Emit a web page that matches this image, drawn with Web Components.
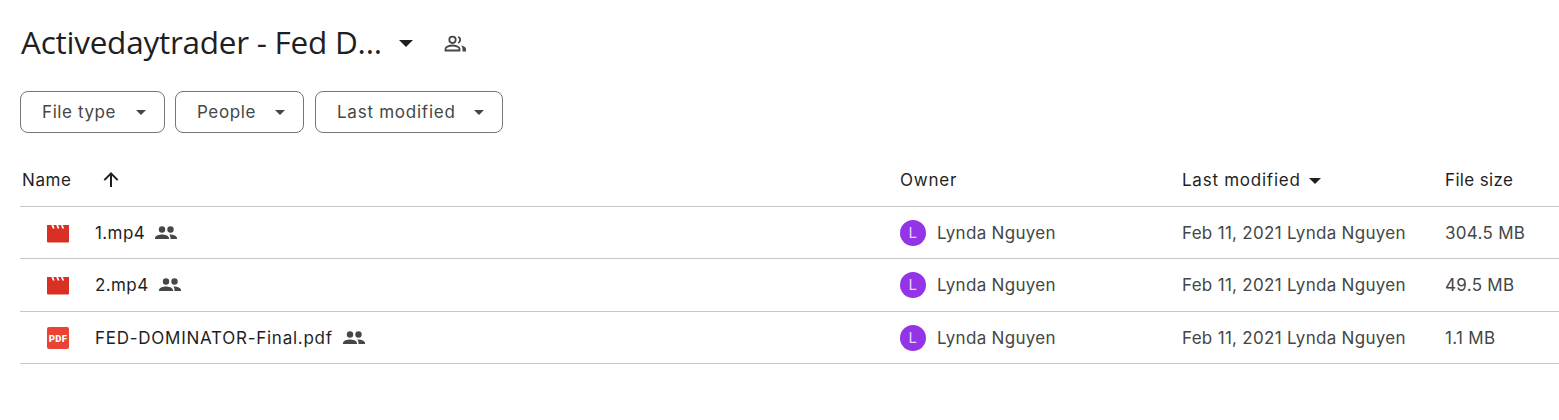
<!DOCTYPE html>
<html>
<head>
<meta charset="utf-8">
<title>Activedaytrader - Fed D...</title>
<style>
  html, body { margin: 0; background: #fff; }
  body { font-family: Inter, Roboto, sans-serif; color: #1f1f1f; }
</style>
</head>
<body>
<drive-page>
  <folder-title slot="title">Activedaytrader - Fed D...</folder-title>
  <filter-chip slot="filters" style="--chip-width:145px">File type</filter-chip>
  <filter-chip slot="filters" style="--chip-width:129px">People</filter-chip>
  <filter-chip slot="filters" style="--chip-width:188px;--chip-spacing:.75px;margin-left:1px">Last modified</filter-chip>
  <list-header slot="list"></list-header>
  <file-row slot="list" kind="video" name="1.mp4" owner="Lynda Nguyen" modified="Feb 11, 2021 Lynda Nguyen" size="304.5 MB"></file-row>
  <file-row slot="list" kind="video" name="2.mp4" owner="Lynda Nguyen" modified="Feb 11, 2021 Lynda Nguyen" size="49.5 MB"></file-row>
  <file-row slot="list" kind="pdf" name="FED-DOMINATOR-Final.pdf" owner="Lynda Nguyen" modified="Feb 11, 2021 Lynda Nguyen" size="1.1 MB" style="--name-spacing:.74px;--row-nudge:1px"></file-row>
</drive-page>

<script>
// people icons used in more than one element
const SHARED_OUTLINE = `<svg width="24" height="24" viewBox="0 0 24 24" fill="none" stroke="#444746" stroke-width="1.8"><circle cx="9.500" cy="7.800" r="3.200"/><path d="M2.500 18.500v-1.700c0-2 4.300-3.300 7-3.300s7 1.300 7 3.300v1.700z"/><path d="M15.200 4.700a3.500 3.500 0 0 1 0 6.300"/><path fill="#444746" stroke="none" d="M18 13.400c2.700.5 5 1.500 5 3.500v2.500h-3.500v-2.500c0-1.500-.6-2.600-1.500-3.500z"/></svg>`;
const SHARED_SOLID = `<svg width="24" height="24" viewBox="0 0 24 24" fill="#444746"><circle cx="8" cy="8.500" r="3.200"/><circle cx="16.500" cy="8.500" r="3.200"/><path d="M1 18v-1c0-2.400 4.700-3.500 7-3.500s7 1.100 7 3.500v1H1zM17 13.500c2.300.2 6 1.500 6 3.500v1h-6.500v-1c0-1.500-.5-2.700-1.400-3.400.5-.1 1.300-.1 1.900-.1z"/></svg>`;
const ICONS = {
  video: `<svg width="22" height="22" viewBox="0 0 22 22"><path fill="#d93025" d="M0 3h22v16.500a1 1 0 0 1-1 1H1a1 1 0 0 1-1-1z"/><path fill="#fff" d="M4.500 3h1.800l1.300 3.600H5.800zM9.300 3h1.800l1.300 3.600h-1.800zM14 3h1.800l1.300 3.600h-1.800z"/></svg>`,
  pdf: `<svg width="22" height="22" viewBox="0 0 22 22"><rect width="22" height="22" rx="2" fill="#ea4335"/><text x="11" y="14.500" text-anchor="middle" font-family="Roboto, sans-serif" font-weight="900" font-size="9.500" letter-spacing=".4" fill="#fff">PDF</text></svg>`
};

class DrivePage extends HTMLElement {
  constructor() {
    super();
    this.attachShadow({ mode: 'open' });
    this.shadowRoot.innerHTML = /*html*/ `
      <style>
        :host { display: block; width: 1559px; height: 420px; overflow: hidden; box-sizing: border-box; padding-top: 20px; }
        .title { padding-left: 21px; height: 47px; display: flex; align-items: center; }
        .filters { display: flex; gap: 10px; padding: 24px 0 0 20px; }
        .list { display: flex; flex-direction: column; padding: 26px 0 0 20px; }
      </style>
      <div class="title"><slot name="title"></slot></div>
      <div class="filters"><slot name="filters"></slot></div>
      <div class="list"><slot name="list"></slot></div>
    `;
  }
}

class FolderTitle extends HTMLElement {
  constructor() {
    super();
    this.attachShadow({ mode: 'open' });
    this.shadowRoot.innerHTML = /*html*/ `
      <style>
        :host { display: flex; align-items: center; color: #1f1f1f; }
        .text { font: 400 31.5px/40px "Open Sans", Roboto, sans-serif; letter-spacing: -0.25px; width: 361px; white-space: nowrap; margin-top: -3px; }
        .caret { width: 0; height: 0; border: 7px solid transparent; border-top: 7px solid #1f1f1f; border-bottom: 0; margin-left: 17px; }
        .people { display: flex; margin-left: 30px; }
      </style>
      <span class="text"><slot></slot></span>
      <span class="caret"></span>
      <span class="people">${SHARED_OUTLINE}</span>
    `;
  }
}

class FilterChip extends HTMLElement {
  constructor() {
    super();
    this.attachShadow({ mode: 'open' });
    this.shadowRoot.innerHTML = /*html*/ `
      <style>
        :host { display: flex; align-items: center; justify-content: space-between; box-sizing: border-box; width: var(--chip-width); height: 42px; padding: 0 18px 0 21px; border: 1px solid #747775; border-radius: 8px; font: 400 17px/24px Inter, Roboto, sans-serif; letter-spacing: var(--chip-spacing, .6px); color: #444746; }
        span:first-child { padding-top: 3px; }
        .caret { width: 0; height: 0; border: 5px solid transparent; border-top: 5px solid #444746; border-bottom: 0; }
      </style>
      <span><slot></slot></span>
      <span class="caret"></span>
    `;
  }
}

class ListHeader extends HTMLElement {
  constructor() {
    super();
    this.attachShadow({ mode: 'open' });
    this.shadowRoot.innerHTML = /*html*/ `
      <style>
        :host { display: grid; grid-template-columns: 880px 282px 263px 1fr; align-items: center; height: 48px; padding-bottom: 5px; box-sizing: border-box; border-bottom: 1px solid #c7c7c7; font: 400 17px/24px Inter, Roboto, sans-serif; letter-spacing: .6px; color: #1f1f1f; }
        .name { display: flex; align-items: center; padding-left: 2px; }
        .name svg { margin-left: 27px; }
        .owner { letter-spacing: .8px; }
        .mod { display: flex; align-items: center; gap: 8px; letter-spacing: .75px; }
        .size { letter-spacing: .35px; }
        .caret { width: 0; height: 0; border: 6.5px solid transparent; border-top: 6.5px solid #1f1f1f; border-bottom: 0; margin-top: 2px; }
      </style>
      <div class="name">Name
        <svg width="24" height="24" viewBox="0 0 24 24" fill="#1f1f1f"><path d="M11 19V7.800L6 12.800 4.600 11.400 12 4l7.400 7.400-1.400 1.400-5-5V19z"/></svg>
      </div>
      <div class="owner">Owner</div>
      <div class="mod">Last modified <span class="caret"></span></div>
      <div class="size">File size</div>
    `;
  }
}

class FileRow extends HTMLElement {
  constructor() {
    super();
    this.attachShadow({ mode: 'open' });
    const kind = this.getAttribute('kind');
    this.shadowRoot.innerHTML = /*html*/ `
      <style>
        :host { display: grid; grid-template-columns: 880px 282px 263px 1fr; align-items: center; height: 52.33px; padding-top: var(--row-nudge, 0); box-sizing: border-box; border-bottom: 1px solid #c7c7c7; font: 400 17px/24px Inter, Roboto, sans-serif; letter-spacing: .3px; color: #444746; }
        .name { display: flex; align-items: center; padding-left: 27px; color: #1f1f1f; }
        .icon { display: flex; width: 48px; flex: none; }
        .label { letter-spacing: var(--name-spacing, .4px); }
        .shared { display: flex; margin-left: 9px; }
        .owner { display: flex; align-items: center; gap: 11px; }
        .avatar { width: 26px; height: 26px; border-radius: 50%; background: #9334e6; color: #e8d5fb; font-size: 15px; line-height: 26px; text-align: center; flex: none; }
      </style>
      <div class="name"><span class="icon">${ICONS[kind]}</span><span class="label">${this.getAttribute('name')}</span><span class="shared">${SHARED_SOLID}</span></div>
      <div class="owner"><span class="avatar">L</span><span>${this.getAttribute('owner')}</span></div>
      <div>${this.getAttribute('modified')}</div>
      <div>${this.getAttribute('size')}</div>
    `;
  }
}

customElements.define('drive-page', DrivePage);
customElements.define('folder-title', FolderTitle);
customElements.define('filter-chip', FilterChip);
customElements.define('list-header', ListHeader);
customElements.define('file-row', FileRow);
</script>
</body>
</html>
